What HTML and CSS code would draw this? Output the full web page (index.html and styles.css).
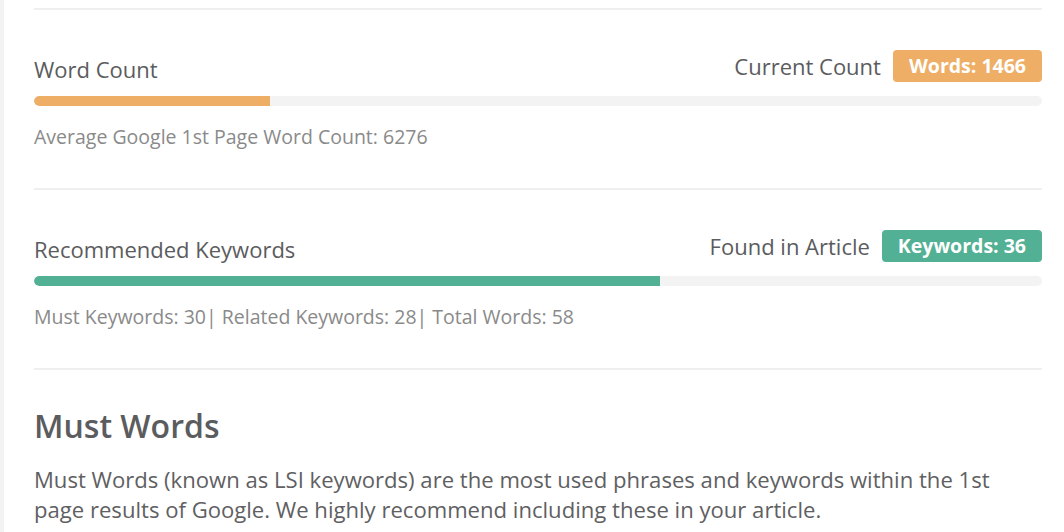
FILE: index.html
```html
<!DOCTYPE html>
<html lang="en">
<head>
    <meta charset="UTF-8">
    <meta name="viewport" content="width=device-width, initial-scale=1.0">
    <title>Content Score</title>
    <link rel="stylesheet" href="styles.css">
</head>
<body>
    <div class="panel">
        <hr class="divider">

        <!-- Word count -->
        <section class="metric">
            <div class="metric-head">
                <h3 class="metric-title">Word Count</h3>
                <div class="metric-side">
                    <span class="side-label">Current Count</span>
                    <span class="badge badge-orange">Words: 1466</span>
                </div>
            </div>
            <div class="track"><div class="fill fill-orange" style="width: 23.4%"></div></div>
            <p class="metric-note">Average Google 1st Page Word Count: 6276</p>
        </section>

        <hr class="divider">

        <!-- Keywords -->
        <section class="metric">
            <div class="metric-head">
                <h3 class="metric-title">Recommended Keywords</h3>
                <div class="metric-side">
                    <span class="side-label">Found in Article</span>
                    <span class="badge badge-green">Keywords: 36</span>
                </div>
            </div>
            <div class="track"><div class="fill fill-green" style="width: 62.1%"></div></div>
            <p class="metric-note">Must Keywords: 30| Related Keywords: 28| Total Words: 58</p>
        </section>

        <hr class="divider">

        <!-- Must words -->
        <section class="intro">
            <h2>Must Words</h2>
            <p>Must Words (known as LSI keywords) are the most used phrases and keywords within the 1st page results of Google. We highly recommend including these in your article.</p>
        </section>
    </div>
</body>
</html>
```

FILE: styles.css
```css
/* Genel */
body {
    margin: 0;
    background-color: #f3f3f3;
    font-family: "Open Sans", Arial, sans-serif;
    color: #5b5c5e;
}

.panel {
    margin-left: 4px;
    min-height: 532px;
    background-color: #fff;
    padding: 8px 22px 0 30px;
}

.divider {
    border: none;
    border-top: 2px solid #efefef;
    margin: 0;
}

/* Metrik blokları */
.metric {
    padding: 40px 0 38px;
}

.metric-head {
    display: flex;
    justify-content: space-between;
    align-items: flex-end;
}

.metric-title {
    margin: 0 0 -1px;
    font-size: 22px;
    font-weight: 400;
    line-height: 28px;
}

.metric-side {
    display: flex;
    align-items: center;
    gap: 12px;
}

.side-label {
    font-size: 22px;
    line-height: 28px;
}

.badge {
    display: inline-block;
    color: #fff;
    font-weight: 700;
    font-size: 19.5px;
    line-height: 32px;
    padding: 0 16px;
    border-radius: 4px;
}

.badge-orange { background-color: #eeae65; }
.badge-green { background-color: #52b094; }

/* Çubuk */
.track {
    margin-top: 14px;
    height: 10px;
    border-radius: 5px;
    background-color: #f3f3f3;
    overflow: hidden;
}

.fill {
    height: 100%;
    border-radius: 5px 0 0 5px;
}

.fill-orange { background-color: #eeae65; }
.fill-green { background-color: #52b094; }

.metric-note {
    margin: 18px 0 0;
    font-size: 19.5px;
    line-height: 26px;
    color: #8a8a8a;
}

/* Açıklama */
.intro h2 {
    margin: 36px 0 0;
    font-size: 32px;
    font-weight: 600;
    line-height: 40px;
}

.intro p {
    max-width: 1000px;
    margin: 18px 0 0;
    font-size: 22.1px;
    line-height: 30px;
    color: #5f6062;
}
```
